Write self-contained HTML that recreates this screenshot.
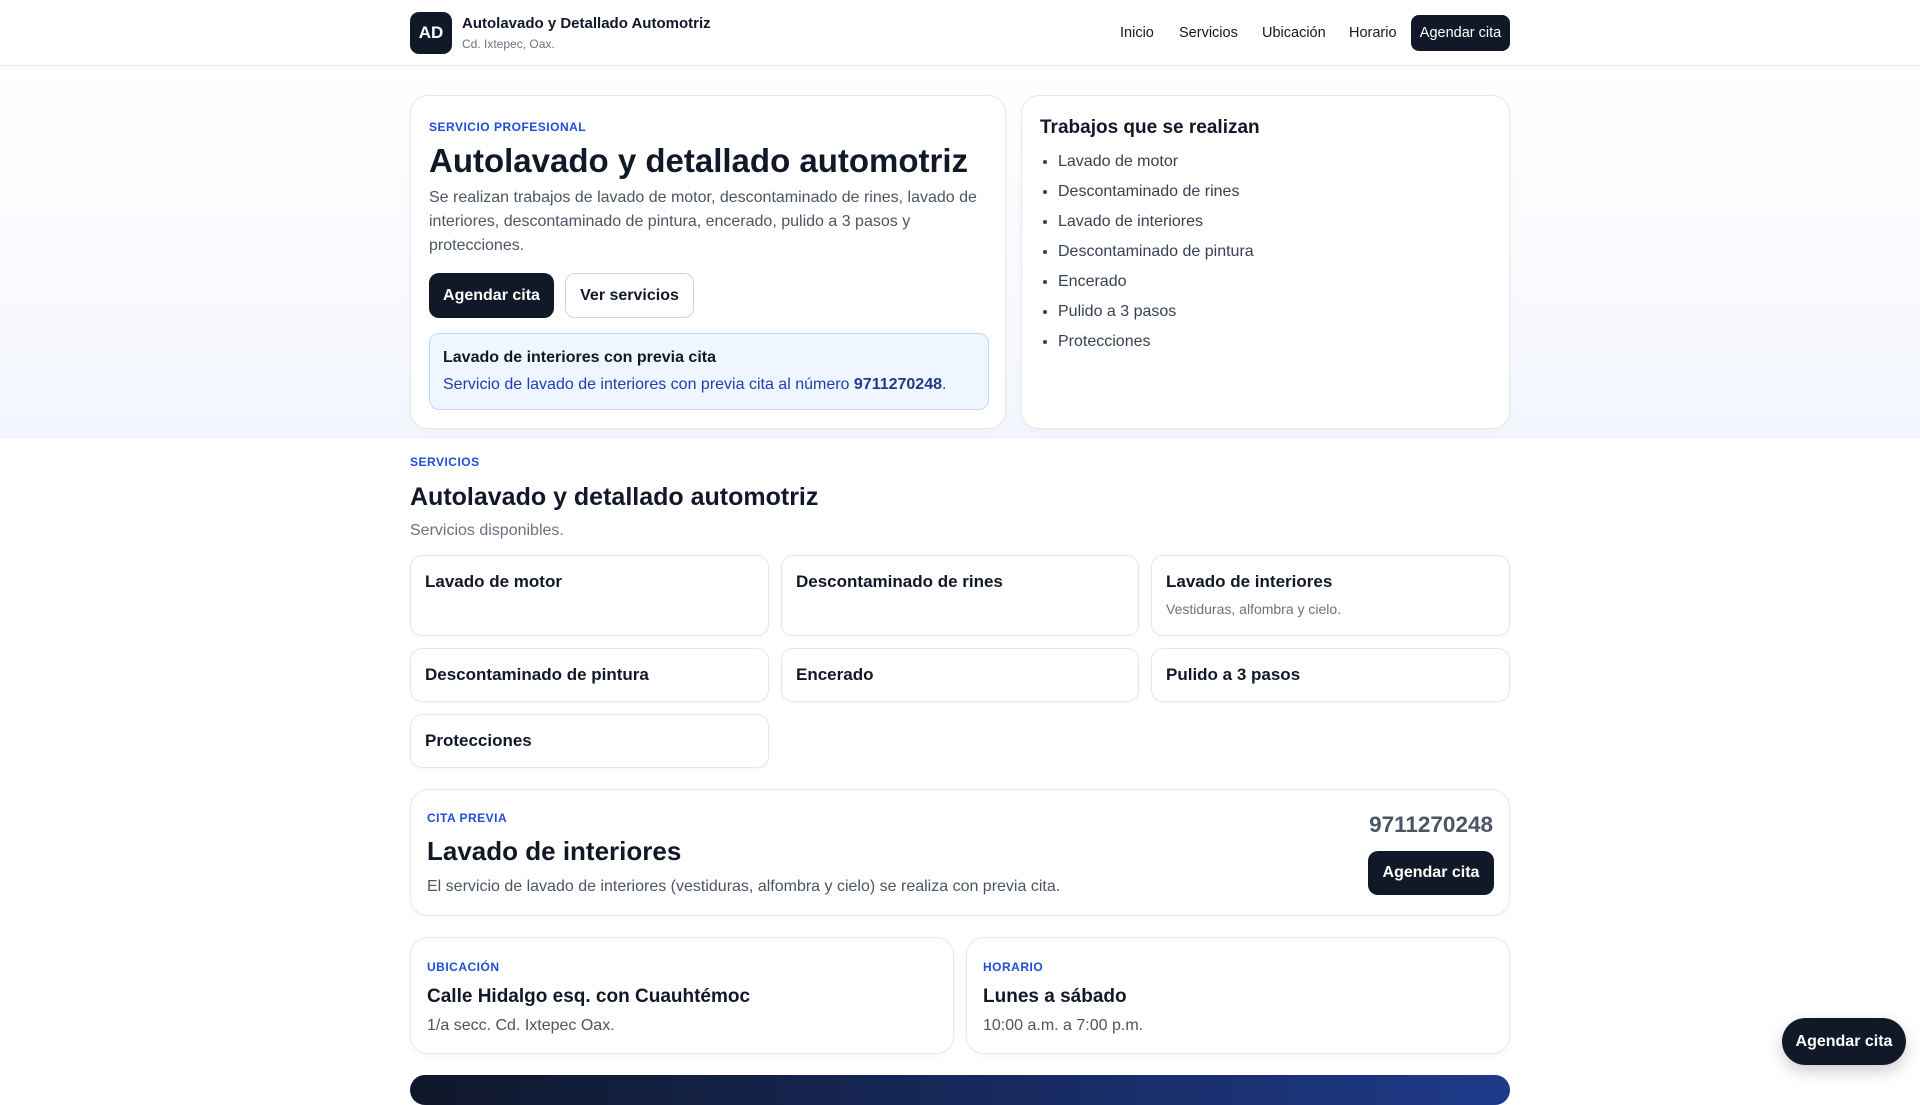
<!DOCTYPE html>
<html><head><meta charset="utf-8"><style>
*{box-sizing:border-box;margin:0;padding:0}
body{width:1920px;height:1080px;overflow:hidden;font-family:"Liberation Sans",sans-serif;color:#111827;background:#fff;position:relative}
.hdr{height:66px;border-bottom:1px solid #e5e7eb;position:relative}
.logo{position:absolute;left:410px;top:12px;width:42px;height:42px;border-radius:9px;background:#111827;color:#fff;font-weight:700;font-size:17px;display:flex;align-items:center;justify-content:center}
.bt{position:absolute;left:462px;top:15px;font-size:15px;font-weight:700}
.bs{position:absolute;left:462px;top:37px;font-size:12px;color:#6b7280}
.nav{position:absolute;top:0;height:66px;display:flex;align-items:center;font-size:14.5px;color:#111827}
.nb{position:absolute;left:1411px;top:15px;width:99px;height:36px;border-radius:8px;background:#111827;color:#fff;font-size:14.5px;display:flex;align-items:center;justify-content:center}
.band{position:absolute;left:0;top:67px;width:1920px;height:372px;background:linear-gradient(180deg,#fff 0%,#f3f6fd 100%)}
.card{position:absolute;background:#fff;border:1px solid #e5e7eb;border-radius:18px;box-shadow:0 2px 8px rgba(0,0,0,.03)}
.lab{font-size:12px;font-weight:700;color:#1d4ed8;letter-spacing:.5px;position:absolute}
.abs{position:absolute}
.btn{position:absolute;border-radius:10px;background:#111827;color:#fff;font-weight:700;font-size:16px;display:flex;align-items:center;justify-content:center}
.sc{position:absolute;border:1px solid #e5e7eb;border-radius:12px;background:#fff;padding:16px 14px;box-shadow:0 1px 4px rgba(0,0,0,.03)}
.sc b{font-size:17px;display:block;line-height:20px}
.sc span{display:block;font-size:14px;color:#6b7280;margin-top:9px}
ul{position:absolute;left:1058px;top:147px;font-size:16px;color:#374151;line-height:30px}
</style></head><body>
<div class="band"></div>
<div class="hdr">
<div class="logo">AD</div>
<div class="bt">Autolavado y Detallado Automotriz</div>
<div class="bs">Cd. Ixtepec, Oax.</div>
<div class="nav" style="left:1120px">Inicio</div>
<div class="nav" style="left:1179px">Servicios</div>
<div class="nav" style="left:1262px">Ubicación</div>
<div class="nav" style="left:1349px">Horario</div>
<div class="nb">Agendar cita</div>
</div>

<div class="card" style="left:410px;top:95px;width:596px;height:334px">
<div class="lab" style="left:18px;top:24px">SERVICIO PROFESIONAL</div>
<div class="abs" style="left:18px;top:46px;font-size:33px;font-weight:700;white-space:nowrap">Autolavado y detallado automotriz</div>
<div class="abs" style="left:18px;top:90px;width:565px;font-size:16px;line-height:24px;color:#4b5563">Se realizan trabajos de lavado de motor, descontaminado de rines, lavado de interiores, descontaminado de pintura, encerado, pulido a 3 pasos y protecciones.</div>
<div class="btn" style="left:18px;top:177px;width:125px;height:45px">Agendar cita</div>
<div class="abs" style="left:154px;top:177px;width:129px;height:45px;border:1px solid #d1d5db;border-radius:10px;font-weight:700;font-size:16px;display:flex;align-items:center;justify-content:center">Ver servicios</div>
<div class="abs" style="left:18px;top:237px;width:560px;height:77px;background:#eff6ff;border:1px solid #bfdbfe;border-radius:10px">
<div class="abs" style="left:13px;top:15px;font-weight:700;font-size:16px">Lavado de interiores con previa cita</div>
<div class="abs" style="left:13px;top:42px;font-size:16px;color:#1e40af;white-space:nowrap">Servicio de lavado de interiores con previa cita al número <b style="color:#1e3a8a">9711270248</b>.</div>
</div>
</div>

<div class="card" style="left:1021px;top:95px;width:489px;height:334px">
<div class="abs" style="left:18px;top:21px;font-size:19px;font-weight:700">Trabajos que se realizan</div>
</div>
<ul><li>Lavado de motor</li><li>Descontaminado de rines</li><li>Lavado de interiores</li><li>Descontaminado de pintura</li><li>Encerado</li><li>Pulido a 3 pasos</li><li>Protecciones</li></ul>

<div class="lab" style="left:410px;top:455px">SERVICIOS</div>
<div class="abs" style="left:410px;top:483px;font-size:25px;font-weight:700">Autolavado y detallado automotriz</div>
<div class="abs" style="left:410px;top:522px;font-size:16px;color:#6b7280">Servicios disponibles.</div>

<div class="sc" style="left:410px;top:555px;width:359px;height:81px"><b>Lavado de motor</b></div>
<div class="sc" style="left:781px;top:555px;width:358px;height:81px"><b>Descontaminado de rines</b></div>
<div class="sc" style="left:1151px;top:555px;width:359px;height:81px"><b>Lavado de interiores</b><span>Vestiduras, alfombra y cielo.</span></div>
<div class="sc" style="left:410px;top:648px;width:359px;height:54px"><b>Descontaminado de pintura</b></div>
<div class="sc" style="left:781px;top:648px;width:358px;height:54px"><b>Encerado</b></div>
<div class="sc" style="left:1151px;top:648px;width:359px;height:54px"><b>Pulido a 3 pasos</b></div>
<div class="sc" style="left:410px;top:714px;width:359px;height:54px"><b>Protecciones</b></div>

<div class="card" style="left:410px;top:789px;width:1100px;height:127px">
<div class="lab" style="left:16px;top:21px">CITA PREVIA</div>
<div class="abs" style="left:16px;top:46px;font-size:26px;font-weight:700">Lavado de interiores</div>
<div class="abs" style="left:16px;top:88px;font-size:16px;color:#4b5563">El servicio de lavado de interiores (vestiduras, alfombra y cielo) se realiza con previa cita.</div>
<div class="abs" style="right:16px;top:22px;font-size:22.5px;font-weight:700;color:#4b5563">9711270248</div>
<div class="btn" style="left:957px;top:61px;width:126px;height:44px">Agendar cita</div>
</div>

<div class="card" style="left:410px;top:937px;width:544px;height:117px">
<div class="lab" style="left:16px;top:22px">UBICACIÓN</div>
<div class="abs" style="left:16px;top:48px;font-size:19px;font-weight:700">Calle Hidalgo esq. con Cuauhtémoc</div>
<div class="abs" style="left:16px;top:79px;font-size:16px;color:#4b5563">1/a secc. Cd. Ixtepec Oax.</div>
</div>
<div class="card" style="left:966px;top:937px;width:544px;height:117px">
<div class="lab" style="left:16px;top:22px">HORARIO</div>
<div class="abs" style="left:16px;top:48px;font-size:19px;font-weight:700">Lunes a sábado</div>
<div class="abs" style="left:16px;top:79px;font-size:16px;color:#4b5563">10:00 a.m. a 7:00 p.m.</div>
</div>
<div class="abs" style="left:410px;top:1075px;width:1100px;height:30px;border-radius:16px;background:linear-gradient(90deg,#0f172a,#1e3a8a)"></div>
<div class="btn" style="left:1782px;top:1018px;width:124px;height:47px;border-radius:24px;box-shadow:0 6px 16px rgba(0,0,0,.2)">Agendar cita</div>
</body></html>
